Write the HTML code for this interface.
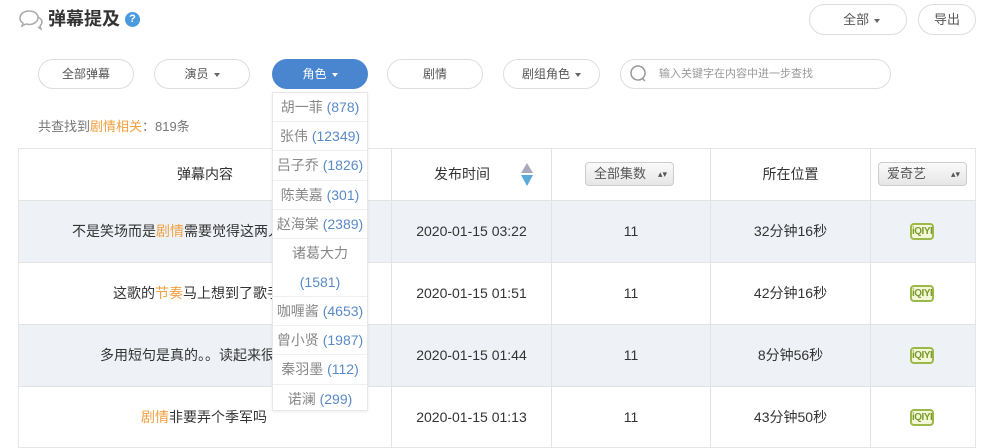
<!DOCTYPE html>
<html><head><meta charset="utf-8"><style>
*{margin:0;padding:0;box-sizing:border-box}
body{width:1000px;height:444px;overflow:hidden;background:#fff;font-family:"Liberation Sans","Noto Sans CJK SC",sans-serif;color:#333;position:relative}
.a{position:absolute}
.btn{position:absolute;border:1px solid #ddd;border-radius:16px;background:#fff;font-size:12px;color:#555;text-align:center;line-height:28px;height:30px}
.car{display:inline-block;border-left:3.5px solid transparent;border-right:3.5px solid transparent;border-top:4px solid #666;vertical-align:middle;margin-left:5px}
.hl{color:#f0a040}
.cell,.t{position:absolute;font-size:14px;line-height:16px;white-space:nowrap}
.cell{text-align:center}
.dd div{height:29.2px;line-height:29px;text-align:center;font-size:14px;color:#888;border-bottom:1px solid #f0f0f0;white-space:nowrap}
.dd span{color:#5a8ac6}
.sel{position:absolute;height:24px;border:1px solid #ccc;border-radius:4px;background:linear-gradient(#fafafa,#e6e6e6);font-size:13px;color:#555;line-height:22px;padding-left:8px}
.iq{position:absolute;width:24px;height:17px;border:2px solid #9cb84a;border-radius:4px;background:#f3f8d8;color:#7a9a2a;font-size:10px;font-weight:bold;text-align:center;line-height:13px;letter-spacing:-0.5px}
</style></head><body>
<svg class="a" style="left:18px;top:8px" width="26" height="24" viewBox="0 0 26 24"><path d="M11 3c-5 0-9 3-9 7 0 2 1 4 3 5l-1 3 4-2c1 0 2 .5 3 .5 5 0 9-3 9-7s-4-6.5-9-6.5z" fill="none" stroke="#aaa" stroke-width="1.5"/><path d="M20 9c2 1 4 3 4 5 0 2-1 3-2 4l1 3-3-2" fill="none" stroke="#aaa" stroke-width="1.5"/></svg>
<div class="a" style="left:48px;top:8px;font-size:18px;line-height:22px;font-weight:bold;color:#333">弹幕提及</div>
<div class="a" style="left:125px;top:12px;width:15px;height:15px;border-radius:50%;background:#4a9ae0;color:#fff;font-size:11px;text-align:center;line-height:15px;font-weight:bold">?</div>
<div class="btn" style="left:809px;top:4px;width:98px;height:31px;line-height:29px;font-size:13px">&nbsp;&nbsp;全部<span class="car"></span></div>
<div class="btn" style="left:918px;top:4px;width:58px;height:31px;line-height:29px;font-size:13px">导出</div>
<div class="btn" style="left:38px;top:59px;width:96px">全部弹幕</div>
<div class="btn" style="left:154px;top:59px;width:96px">演员<span class="car"></span></div>
<div class="btn" style="left:272px;top:59px;width:96px;background:#4a86d0;border-color:#4a86d0;color:#fff">角色<span class="car" style="border-top-color:#fff"></span></div>
<div class="btn" style="left:387px;top:59px;width:96px">剧情</div>
<div class="btn" style="left:503px;top:59px;width:97px">剧组角色<span class="car"></span></div>
<div class="btn" style="left:620px;top:59px;width:271px;text-align:left;padding-left:38px;color:#999;font-size:11px">输入关键字在内容中进一步查找</div>
<svg class="a" style="left:629px;top:64px" width="20" height="20"><circle cx="9" cy="9" r="7" fill="none" stroke="#999" stroke-width="1.5"/><path d="M13 14l3 3" stroke="#999" stroke-width="1.5"/></svg>
<div class="a" style="left:38px;top:116px;font-size:13px;color:#777">共查找到<span class="hl">剧情相关</span>：819条</div>
<div class="a" style="left:18px;top:148px;width:958px;height:300px;border:1px solid #e6e6e6"></div>
<div class="a" style="left:19px;top:200px;width:956px;height:62px;background:#eef1f5"></div>
<div class="a" style="left:19px;top:324px;width:956px;height:62px;background:#eef1f5"></div>
<div class="a" style="left:19px;top:200px;width:956px;height:1px;background:#e3e3e3"></div>
<div class="a" style="left:19px;top:262px;width:956px;height:1px;background:#e3e3e3"></div>
<div class="a" style="left:19px;top:324px;width:956px;height:1px;background:#e3e3e3"></div>
<div class="a" style="left:19px;top:386px;width:956px;height:1px;background:#e3e3e3"></div>
<div class="a" style="left:391px;top:148px;width:1px;height:300px;background:#e3e3e3"></div>
<div class="a" style="left:551px;top:148px;width:1px;height:300px;background:#e3e3e3"></div>
<div class="a" style="left:710px;top:148px;width:1px;height:300px;background:#e3e3e3"></div>
<div class="a" style="left:870px;top:148px;width:1px;height:300px;background:#e3e3e3"></div>
<div class="cell" style="left:19px;top:166px;width:372px">弹幕内容</div>
<div class="cell" style="left:402px;top:166px;width:120px">发布时间</div>
<svg class="a" style="left:520px;top:162px" width="14" height="26"><path d="M7 1l6 10H1z" fill="#aab"/><path d="M1 13h12L7 24z" fill="#5aaad8"/></svg>
<div class="sel" style="left:585px;top:162px;width:89px">全部集数 <span style="float:right;margin-right:6px;font-size:9px">▴▾</span></div>
<div class="cell" style="left:711px;top:166px;width:159px">所在位置</div>
<div class="sel" style="left:878px;top:162px;width:89px">爱奇艺 <span style="float:right;margin-right:6px;font-size:9px">▴▾</span></div>
<div class="t" style="left:72px;top:223px">不是笑场而是<span class="hl">剧情</span>需要觉得这两人</div>
<div class="t" style="left:113px;top:285px">这歌的<span class="hl">节奏</span>马上想到了歌手</div>
<div class="t" style="left:100px;top:347px">多用短句是真的。。读起来很</div>
<div class="t" style="left:141px;top:409px"><span class="hl">剧情</span>非要弄个季军吗</div>
<div class="cell" style="left:392px;top:223px;width:159px">2020-01-15 03:22</div>
<div class="cell" style="left:392px;top:285px;width:159px">2020-01-15 01:51</div>
<div class="cell" style="left:392px;top:347px;width:159px">2020-01-15 01:44</div>
<div class="cell" style="left:392px;top:409px;width:159px">2020-01-15 01:13</div>
<div class="cell" style="left:552px;top:223px;width:158px">11</div>
<div class="cell" style="left:552px;top:285px;width:158px">11</div>
<div class="cell" style="left:552px;top:347px;width:158px">11</div>
<div class="cell" style="left:552px;top:409px;width:158px">11</div>
<div class="cell" style="left:711px;top:223px;width:159px">32分钟16秒</div>
<div class="cell" style="left:711px;top:285px;width:159px">42分钟16秒</div>
<div class="cell" style="left:711px;top:347px;width:159px">8分钟56秒</div>
<div class="cell" style="left:711px;top:409px;width:159px">43分钟50秒</div>
<div class="iq" style="left:910px;top:223px">iQIYI</div>
<div class="iq" style="left:910px;top:285px">iQIYI</div>
<div class="iq" style="left:910px;top:347px">iQIYI</div>
<div class="iq" style="left:910px;top:409px">iQIYI</div>
<div class="a dd" style="left:272px;top:92px;width:96px;height:319px;background:#fff;border:1px solid #e8e8e8;box-shadow:0 1px 3px rgba(0,0,0,.08)">
<div>胡一菲 <span>(878)</span></div>
<div>张伟 <span>(12349)</span></div>
<div>吕子乔 <span>(1826)</span></div>
<div>陈美嘉 <span>(301)</span></div>
<div>赵海棠 <span>(2389)</span></div>
<div style="height:58px;line-height:29px">诸葛大力<br><span>(1581)</span></div>
<div>咖喱酱 <span>(4653)</span></div>
<div>曾小贤 <span>(1987)</span></div>
<div>秦羽墨 <span>(112)</span></div>
<div style="border:none">诺澜 <span>(299)</span></div>
</div>
</body></html>
